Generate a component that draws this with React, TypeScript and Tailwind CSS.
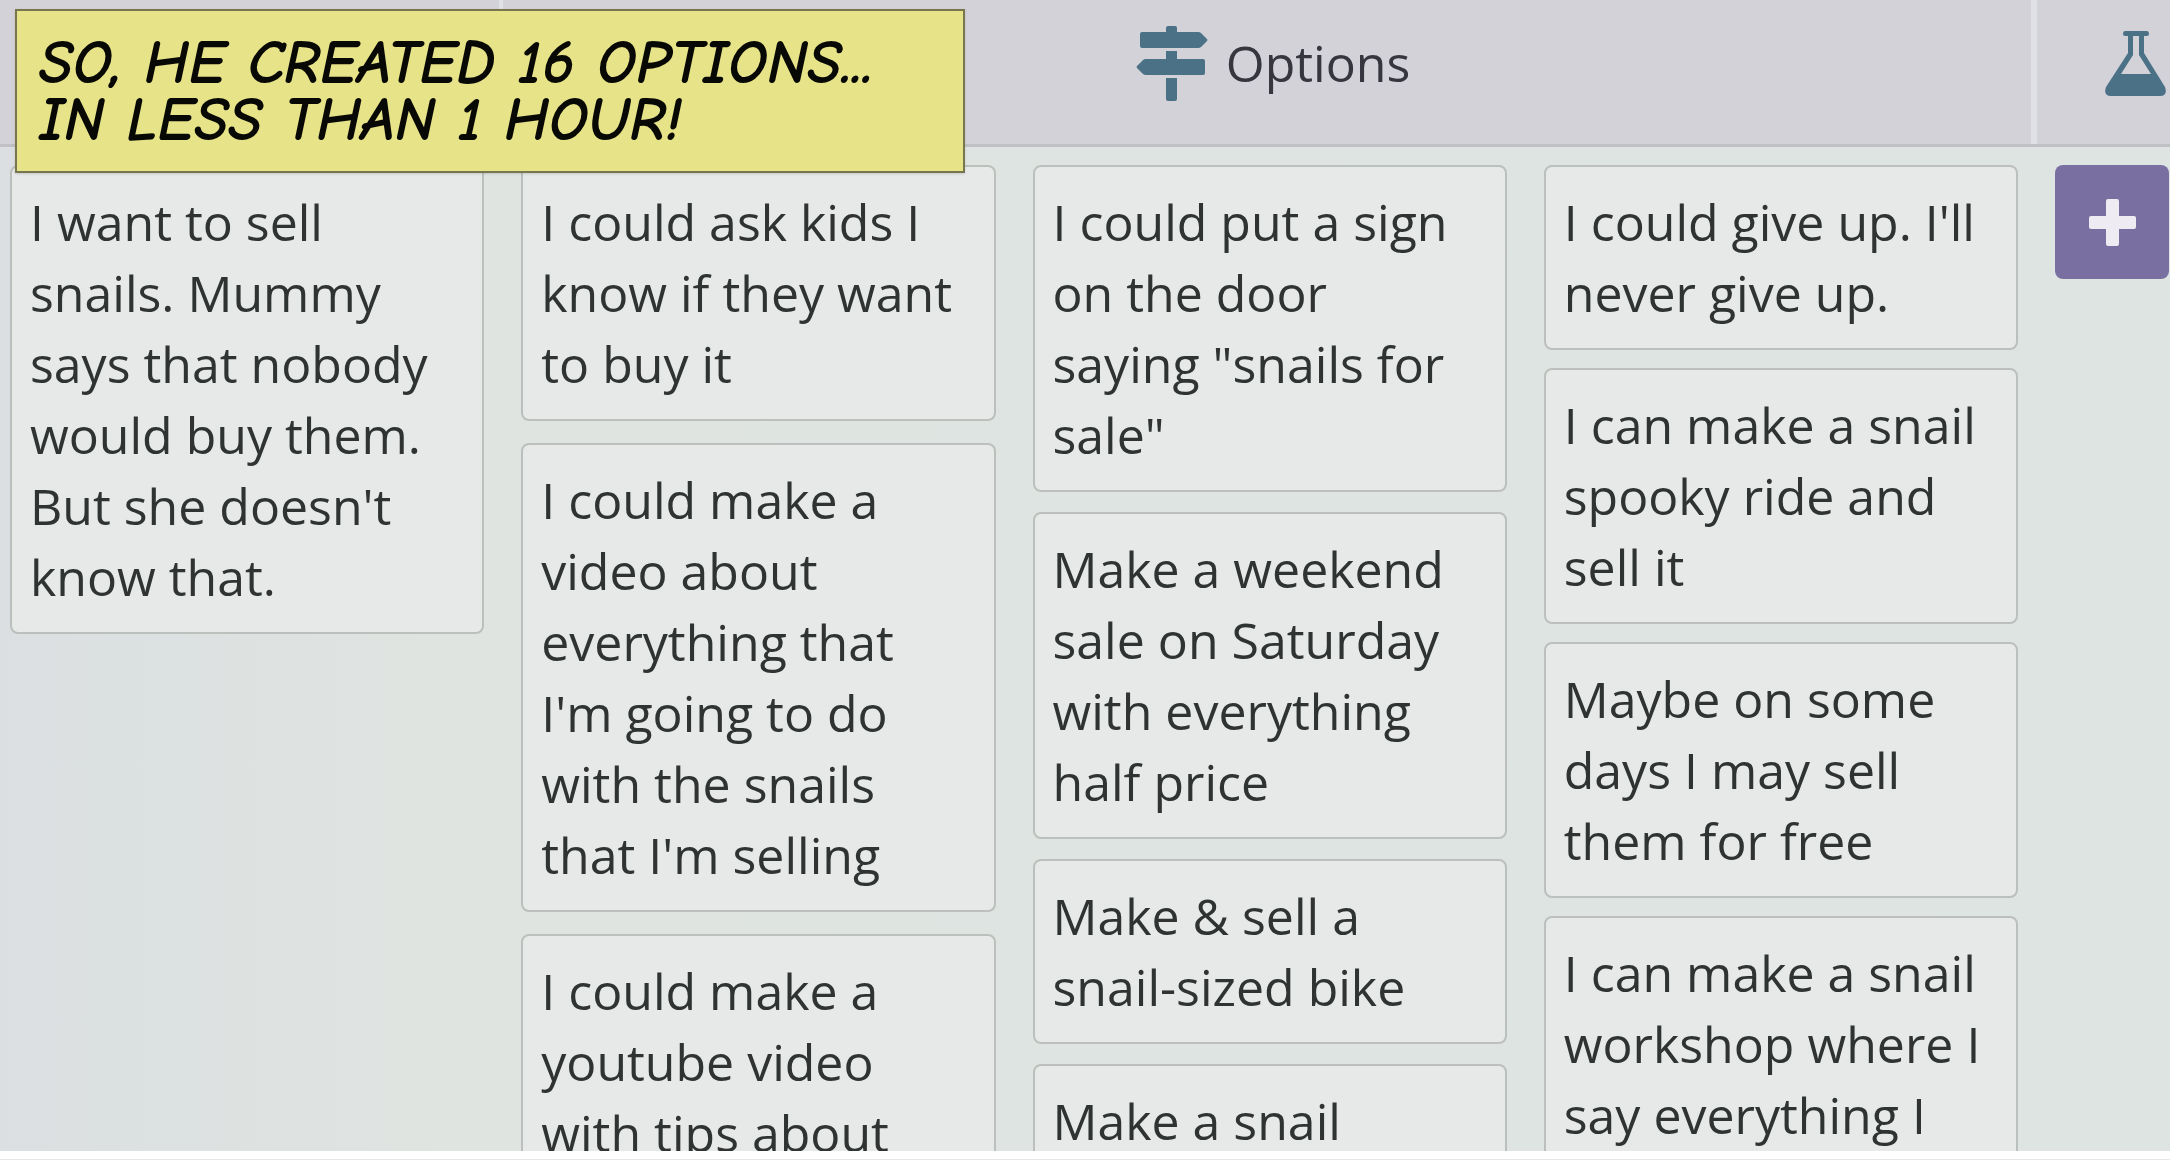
import type { ReactNode } from "react";

const problems = ["I want to sell snails. Mummy says that nobody would buy them. But she doesn't know that."];

const optionsLeft = [
  "I could ask kids I know if they want to buy it",
  "I could make a video about everything that I'm going to do with the snails that I'm selling",
  "I could make a youtube video with tips about",
];

const optionsMiddle = [
  'I could put a sign on the door saying "snails for sale"',
  "Make a weekend sale on Saturday with everything half price",
  "Make & sell a snail-sized bike",
  "Make a snail",
];

const optionsRight = [
  "I could give up. I'll never give up.",
  "I can make a snail spooky ride and sell it",
  "Maybe on some days I may sell them for free",
  "I can make a snail workshop where I say everything I",
];

function SignpostIcon() {
  return (
    <svg viewBox="0 0 72 75" className="w-[72px] h-[75px] shrink-0" fill="currentColor" aria-hidden="true">
      <path d="M30 6V2Q30 0 32 0H39Q41 0 41 2V6H62Q64 6 65 7L71 13Q72 14 71 15L65 21Q64 22 62 22H6Q4 22 4 20V8Q4 6 6 6Z" />
      <path d="M30 25H41V33H67Q69 33 69 35V47Q69 49 67 49H10Q8 49 7 48L1 42Q0 41 1 40L7 34Q8 33 10 33H30Z" />
      <path d="M30 52H41V73Q41 75 39 75H32Q30 75 30 73Z" />
    </svg>
  );
}

function FlaskIcon() {
  return (
    <svg viewBox="0 0 61 65" className="w-[61px] h-[65px] shrink-0" fill="currentColor" aria-hidden="true">
      <path
        fillRule="evenodd"
        d="M20 0H42Q44 0 44 2.500Q44 5 42 5H39V22L60 56Q63 65 55 65H6Q-2 65 1 56L23 22V5H20Q18 5 18 2.500Q18 0 20 0ZM28 5V24L16 43H46L34 24V5Z"
      />
    </svg>
  );
}

function Card({ children }: { children: ReactNode }) {
  return (
    <li className="shrink-0 rounded-lg border-2 border-[#bcc0bd] bg-[#e6e9e7] pt-5 pr-8 pb-[19px] pl-[18px] text-[50px] leading-[71px] text-[#2f3332]">
      {children}
    </li>
  );
}

function Column({ cards, gap = "gap-5" }: { cards: string[]; gap?: string }) {
  return (
    <ul className={`flex min-w-0 flex-col ${gap}`}>
      {cards.map((text) => (
        <Card key={text}>{text}</Card>
      ))}
    </ul>
  );
}

export default function App() {
  return (
    <div className="relative flex h-screen flex-col overflow-hidden bg-white font-['Open_Sans',sans-serif]">
      {/* Column headers */}
      <header className="flex h-[147px] shrink-0 border-b-3 border-[#c1c1c5] bg-[#d2d2d8] text-[#4b7186]">
        <div className="w-[503px] shrink-0 border-r-4 border-[#e0e1e5]" />
        <div className="flex flex-1 items-center justify-center gap-[18px] pb-[18px] pl-3">
          <SignpostIcon />
          <h2 className="text-[50px] leading-[71px] text-[#36373e]">Options</h2>
        </div>
        <div className="flex w-[139px] shrink-0 items-center border-l-6 border-[#e0e1e5] pb-[18px] pl-[68px]">
          <FlaskIcon />
        </div>
      </header>

      {/* Board */}
      <main className="grid min-h-0 flex-1 grid-cols-[repeat(4,minmax(0,1fr))_115px] gap-x-[37px] overflow-hidden bg-linear-to-r from-[#dbdfe1] via-[#dfe4e1] via-20% to-[#dee4e2] pt-[18px] pl-[10px]">
        <Column cards={problems} />
        <Column cards={optionsLeft} gap="gap-[22px]" />
        <Column cards={optionsMiddle} />
        <Column cards={optionsRight} gap="gap-[18px]" />
        <button
          type="button"
          aria-label="Add card"
          className="flex h-[114px] w-[114px] items-center justify-center rounded-lg bg-[#7970a1] text-[#eeebf3]"
        >
          <svg viewBox="0 0 47 47" className="w-[47px] h-[47px]" fill="currentColor" aria-hidden="true">
            <path d="M19 0H28Q30 0 30 2V17H45Q47 17 47 19V28Q47 30 45 30H30V45Q30 47 28 47H19Q17 47 17 45V30H2Q0 30 0 28V19Q0 17 2 17H17V2Q17 0 19 0Z" />
          </svg>
        </button>
      </main>

      <footer className="h-[9px] shrink-0 border-b border-[#e6e6e6] bg-white" />

      {/* Caption */}
      <div className="absolute top-[9px] left-[15px] h-[164px] w-[950px] border-2 border-[#77764d] bg-[#e7e389] pt-6 pl-[22px] shadow-sm">
        <p className="font-['Comic_Neue','Comic_Sans_MS',Lato,sans-serif] text-[62px] leading-[57px] font-bold whitespace-nowrap text-[#080804] italic">
          SO, HE CREATED 16 OPTIONS...
          <br />
          IN LESS THAN 1 HOUR!
        </p>
      </div>
    </div>
  );
}
